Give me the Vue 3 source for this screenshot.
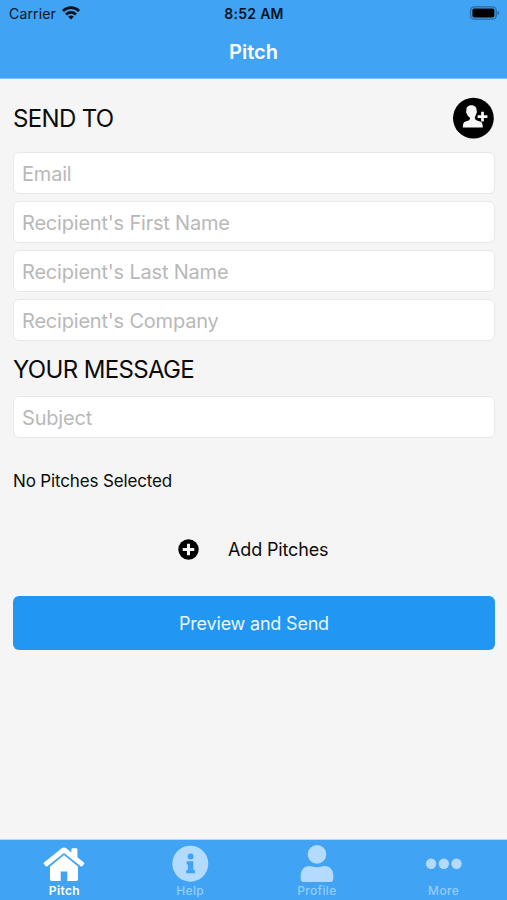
<script setup>
const recipientFields = ['Email', "Recipient's First Name", "Recipient's Last Name", "Recipient's Company"]
const tabs = ['Pitch', 'Help', 'Profile', 'More']
</script>

<template>
  <div class="screen">
    <header class="top">
      <div class="status">
        <div class="carrier">
          <span>Carrier</span>
          <svg class="wifi" width="18" height="14" viewBox="0 0 18 14">
            <g fill="none" stroke="#06131f" stroke-width="2.7">
              <path d="M.9 5A11.4 11.4 0 0 1 17.1 5" />
              <path d="M4 8.5A7.1 7.1 0 0 1 14 8.5" />
            </g>
            <path d="M6.2 10.8A4 4 0 0 1 11.8 10.8L9 13.6Z" fill="#06131f" />
          </svg>
        </div>
        <span class="time">8:52 AM</span>
        <svg class="battery" width="31" height="14" viewBox="0 0 31 14">
          <rect x="1.6" y="0.8" width="25.6" height="12.4" rx="3.6" fill="none" stroke="#2a6c9f" stroke-width="1.3" />
          <rect x="3.4" y="2.5" width="22" height="9" rx="1.8" fill="#000" />
          <path d="M28.6 4.8Q30.2 5.3 30.2 7T28.6 9.2Z" fill="#2a6c9f" />
        </svg>
      </div>
      <h1>Pitch</h1>
    </header>

    <main>
      <div class="send-head">
        <h2>SEND TO</h2>
        <button class="contact" aria-label="Add contact">
          <svg width="42" height="42" viewBox="0 0 42 42">
            <circle cx="21.4" cy="21.2" r="20.4" fill="#000" />
            <path d="M19.3 8.2C23 8.2 24.9 10.4 24.6 13.8C25.2 14.3 24.9 16.3 24.1 16.9C23.8 18.6 22.9 19.4 22.8 20.6C22.8 22.2 23.4 22.9 25 23.5L28.8 24.8C30.3 25.5 30.7 27.6 30.8 30.4H10.8C10.9 27.6 11.3 25.5 12.9 24.8L16.6 23.5C17.8 23 18.1 22.2 17.9 20.6C16.7 19.5 15.3 18.6 15 16.9C14 16.3 13.9 14.3 14.4 13.8C14.1 10.4 15.8 8.2 19.3 8.2Z" fill="#f8f8f8" />
            <path d="M30.5 14.8V24.6M25.6 19.7H35.4" stroke="#f8f8f8" stroke-width="2.7" />
          </svg>
        </button>
      </div>
      <div class="fields">
        <input v-for="f in recipientFields" :key="f" type="text" :placeholder="f" />
      </div>
      <h2 class="message-head">YOUR MESSAGE</h2>
      <input class="subject" type="text" placeholder="Subject" />
      <p class="none">No Pitches Selected</p>
      <div class="add">
        <svg width="21" height="21" viewBox="0 0 21 21">
          <circle cx="10.5" cy="10.5" r="10.2" fill="#000" />
          <path d="M10.5 4.7V16.3M4.7 10.5H16.3" stroke="#f5f5f5" stroke-width="3" />
        </svg>
        <span>Add Pitches</span>
      </div>
      <button class="send"><span>Preview and Send</span></button>
    </main>

    <nav>
      <a v-for="(t, i) in tabs" :key="t" :class="['tab', 'tab-' + t.toLowerCase()]">
        <svg width="42" height="42" viewBox="0 0 42 42">
          <g v-if="i === 0" fill="#fff">
            <path d="M7 23.6L21 12.3L35 23.6V37.3Q35 39 33.2 39H24.3V29.6H17.7V39H8.8Q7 39 7 37.3Z" />
            <path d="M4 25L21 11.2L38 25" fill="none" stroke="#41a3f3" stroke-width="3" />
            <path d="M1 20.4L18.7 6.3Q21 4.5 23.3 6.3L28.4 10.4V7.3Q28.4 6.2 29.5 6.2H33.2Q34.4 6.2 34.4 7.3V15.2L41 20.6Q41.8 21.2 41.1 22L39.2 24.2Q38.5 24.9 37.7 24.2L21 10.9L4.3 24.2Q3.5 24.9 2.8 24.2L.9 22Q.2 21.2 1 20.4Z" />
          </g>
          <g v-else-if="i === 1">
            <circle cx="21.3" cy="21.7" r="18" fill="#b3daff" />
            <circle cx="21.6" cy="14.4" r="3" fill="#41a3f3" />
            <path d="M17.6 19.3H24.3V28.1H26V31.2H17.2V28.1H18.9V22.4H17.6Z" fill="#41a3f3" />
          </g>
          <g v-else-if="i === 2" fill="#b3daff">
            <circle cx="21" cy="12.4" r="9.3" />
            <path d="M13.5 24.1Q21 26.3 28.5 24.1C34 24.1 37.3 28.3 37.3 33.8V37.1Q37.3 40.1 34.3 40.1H7.7Q4.7 40.1 4.7 37.1V33.8C4.7 28.3 8 24.1 13.5 24.1Z" />
          </g>
          <g v-else fill="#b3daff">
            <circle cx="8.1" cy="21.7" r="5.2" />
            <circle cx="20.8" cy="21.7" r="5.2" />
            <circle cx="33.5" cy="21.7" r="5.2" />
          </g>
        </svg>
        <span>{{ t }}</span>
      </a>
    </nav>
  </div>
</template>

<style>
body { margin: 0; background: #f5f5f5; }
</style>

<style scoped>
* { box-sizing: border-box; }
.screen { height: 900px; display: flex; flex-direction: column; background: #f5f5f5; font-family: Inter, "Liberation Sans", sans-serif; color: #0b0b0b; overflow: hidden; }
.top { height: 79px; background: #41a3f3; border-bottom: 1px solid #80c0f5; flex: none; }
.status { height: 27px; padding: 0 7px 0 9px; display: grid; grid-template-columns: 1fr auto 1fr; align-items: center; color: #06131f; font-size: 14px; }
.carrier { display: flex; align-items: center; gap: 6px; letter-spacing: .15px; }
.wifi { margin-top: -2px; }
.time { font-weight: 600; letter-spacing: .3px; margin-right: 1px; }
.battery { justify-self: end; margin-top: -1px; }
h1 { margin: 0; height: 51px; line-height: 51px; text-align: center; color: #fff; font-size: 20px; font-weight: 600; }
h2 { margin: 0; font-size: 24px; line-height: 30px; font-weight: 400; letter-spacing: -.65px; }
main { flex: 1; padding: 18px 12px 0 13px; display: flex; flex-direction: column; }
.send-head { height: 42px; display: flex; justify-content: space-between; align-items: center; }
.send-head h2 { padding-top: 2px; }
.contact { border: 0; padding: 0; background: none; display: block; height: 42px; margin-right: 1px; }
.contact svg { display: block; }
.fields { margin-top: 13px; display: grid; gap: 7px; }
input { width: 100%; height: 42px; margin: 0; padding: 2px 8px 0; border: 1px solid #e8e8e8; border-radius: 6px; background: #fff; font-family: inherit; font-size: 20px; letter-spacing: -.2px; color: #111; outline: 0; }
input::placeholder { color: #b8b8b8; opacity: 1; }
.message-head { margin-top: 14px; }
.subject { margin-top: 11px; }
.none { margin: 31px 0 0; height: 24px; line-height: 24px; font-size: 17px; letter-spacing: -.15px; }
.add { margin-top: 44px; height: 24px; padding-left: 165px; display: flex; align-items: center; gap: 29px; font-size: 18px; letter-spacing: -.15px; }
.send { margin-top: 35px; height: 54px; border: 0; border-radius: 6px; background: #2196f3; color: #e9f6ff; font-family: inherit; font-size: 18px; letter-spacing: -.2px; }
nav { height: 61px; flex: none; display: grid; grid-template-columns: repeat(4, 1fr); padding-top: 2px; background: #41a3f3; border-top: 1px solid #c3d6e4; }
.tab { display: flex; flex-direction: column; align-items: center; color: #96cdff; font-size: 12px; font-weight: 500; line-height: 16px; letter-spacing: .35px; }
.tab svg { display: block; flex: none; }
.tab span { margin-top: -1px; }
.tab-pitch { color: #fff; font-weight: 600; padding-left: 2px; }
</style>
